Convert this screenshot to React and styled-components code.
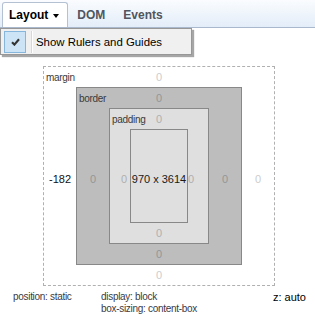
import React from "react";
import styled, { createGlobalStyle } from "styled-components";

const GlobalStyle = createGlobalStyle`
  html, body {
    margin: 0;
    padding: 0;
    background: #ffffff;
    font-family: "Liberation Sans", Arial, sans-serif;
  }
`;

const Page = styled.div`
  position: relative;
  width: 315px;
  height: 328px;
  overflow: hidden;
  background: #ffffff;
`;

const TabBar = styled.div`
  display: flex;
  align-items: flex-end;
  height: 27px;
  padding-left: 2px;
  border-bottom: 1px solid #a9b8cc;
  background: linear-gradient(#fafcfe, #e3edf9);
`;

const Tab = styled.div`
  display: flex;
  align-items: center;
  gap: 5px;
  box-sizing: border-box;
  height: 25px;
  padding: ${({ $active }) => ($active ? "0 8px 0 6px" : "0 8px")};
  font-size: 12px;
  font-weight: bold;
  color: ${({ $active }) => ($active ? "#000" : "#505560")};
  background: ${({ $active }) => ($active ? "#ffffff" : "transparent")};
  border: 1px solid ${({ $active }) => ($active ? "#b4c1d3" : "transparent")};
  border-bottom: none;
  border-radius: 3px 3px 0 0;
`;

const Caret = styled.span`
  width: 0;
  height: 0;
  border-left: 3.5px solid transparent;
  border-right: 3.5px solid transparent;
  border-top: 4px solid #000;
  margin-top: 1px;
`;

const Menu = styled.div`
  position: absolute;
  top: 28px;
  left: 0;
  box-sizing: border-box;
  width: 192px;
  height: 27px;
  display: flex;
  align-items: center;
  padding-left: 3px;
  background: #f0f0f0;
  border: 1px solid #979797;
  box-shadow: 2px 2px 1px rgba(0, 0, 0, 0.35);
`;

const CheckBox = styled.div`
  box-sizing: border-box;
  width: 22px;
  height: 22px;
  display: flex;
  align-items: center;
  justify-content: center;
  background: #cde4f6;
  border: 1px solid #86b6dc;
`;

const Separator = styled.div`
  width: 1px;
  height: 22px;
  margin: 0 4px 0 5px;
  background: #d7d7d7;
  box-shadow: 1px 0 0 #ffffff;
`;

const MenuText = styled.span`
  font-size: 11.4px;
  color: #000;
`;

const Diagram = styled.div`
  padding: 38px 0 0 43px;
`;

const Box = styled.div`
  display: grid;
  width: max-content;
  grid-template-columns: ${({ $side }) => `${$side}px auto ${$side}px`};
  grid-template-rows: 20px auto 20px;
  grid-template-areas:
    "top top top"
    "left inner right"
    "bottom bottom bottom";
  background: ${({ $bg }) => $bg};
  border: 1px ${({ $dashed }) => ($dashed ? "dashed #b0b0b0" : "solid #888888")};
`;

const Label = styled.span`
  grid-area: top;
  justify-self: start;
  align-self: center;
  padding-left: 2px;
  font-size: 10px;
  letter-spacing: -0.3px;
  color: #3a3a3a;
`;

const Value = styled.span`
  grid-area: ${({ $area }) => $area};
  justify-self: ${({ $justify }) => $justify || "center"};
  align-self: center;
  margin-top: ${({ $area }) => ($area === "left" || $area === "right" ? "6px" : "0")};
  padding: ${({ $pad }) => $pad || "0"};
  font-size: 11px;
  line-height: 13px;
  color: ${({ $color }) => $color};
`;

const Inner = styled.div`
  grid-area: inner;
`;

const Content = styled.div`
  box-sizing: border-box;
  width: 58px;
  height: 94px;
  display: flex;
  align-items: center;
  justify-content: center;
  padding-top: 6px;
  background: #dfdfdf;
  border: 1px solid #888888;
  font-size: 11px;
  color: #1a1a1a;
  white-space: nowrap;
`;

const Footer = styled.div`
  display: flex;
  align-items: flex-start;
  padding: 5px 9px 0 13px;
`;

const FooterCol = styled.div`
  display: flex;
  flex-direction: column;
  width: ${({ $w }) => ($w ? `${$w}px` : "auto")};
  flex: ${({ $grow }) => ($grow ? 1 : "none")};
`;

const Prop = styled.span`
  font-size: 10px;
  line-height: 12px;
  letter-spacing: -0.3px;
  color: #3a3a44;
`;

const ZIndex = styled.span`
  font-size: 11px;
  line-height: 13px;
  color: #000;
`;

const Check = () => (
  <svg width="9" height="8" viewBox="0 0 9 8">
    <path d="M1 4.2 L3.4 6.6 L8 1.2" fill="none" stroke="#333" strokeWidth="2.1" />
  </svg>
);

export default function App() {
  return (
    <Page>
      <GlobalStyle />
      <TabBar>
        <Tab $active>
          Layout <Caret />
        </Tab>
        <Tab>DOM</Tab>
        <Tab>Events</Tab>
      </TabBar>

      <Menu>
        <CheckBox>
          <Check />
        </CheckBox>
        <Separator />
        <MenuText>Show Rulers and Guides</MenuText>
      </Menu>

      <Diagram>
        <Box $side={32} $bg="#ffffff" $dashed>
          <Label>margin</Label>
          <Value $area="top" $color="#cdcdcd">0</Value>
          <Value $area="left" $color="#111">-182</Value>
          <Inner>
            <Box $side={32} $bg="#bdbdbd">
              <Label>border</Label>
              <Value $area="top" $color="#959595">0</Value>
              <Value $area="left" $color="#959595">0</Value>
              <Inner>
                <Box $side={20} $bg="#dfdfdf">
                  <Label>padding</Label>
                  <Value $area="top" $color="#b0b0b0">0</Value>
                  <Value $area="left" $justify="end" $pad="0 3px 0 0" $color="#b0b0b0">0</Value>
                  <Inner>
                    <Content>970 x 3614</Content>
                  </Inner>
                  <Value $area="right" $justify="start" $color="#b0b0b0">0</Value>
                  <Value $area="bottom" $color="#b0b0b0">0</Value>
                </Box>
              </Inner>
              <Value $area="right" $color="#959595">0</Value>
              <Value $area="bottom" $color="#959595">0</Value>
            </Box>
          </Inner>
          <Value $area="right" $color="#cdcdcd">0</Value>
          <Value $area="bottom" $color="#cdcdcd">0</Value>
        </Box>
      </Diagram>

      <Footer>
        <FooterCol $w={88}>
          <Prop>position: static</Prop>
        </FooterCol>
        <FooterCol $grow>
          <Prop>display: block</Prop>
          <Prop>box-sizing: content-box</Prop>
        </FooterCol>
        <FooterCol>
          <ZIndex>z: auto</ZIndex>
        </FooterCol>
      </Footer>
    </Page>
  );
}
